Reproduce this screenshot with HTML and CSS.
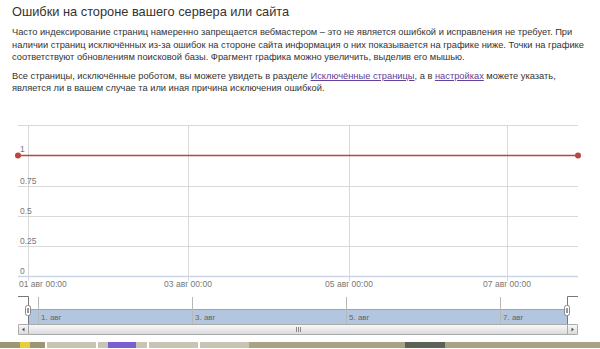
FILE: index.html
```html
<!DOCTYPE html>
<html lang="ru">
<head>
  <meta charset="UTF-8">
  <title>Ошибки на стороне вашего сервера или сайта</title>
  <link rel="stylesheet" href="styles.css">
</head>
<body>
  <div class="intro">
    <h1>Ошибки на стороне вашего сервера или сайта</h1>
    <p>Часто индексирование страниц намеренно запрещается вебмастером – это не является ошибкой и исправления не требует. При наличии страниц исключённых из-за ошибок на стороне сайта информация о них показывается на графике ниже. Точки на графике соответствуют обновлениям поисковой базы. Фрагмент графика можно увеличить, выделив его мышью.</p>
    <p>Все страницы, исключённые роботом, вы можете увидеть в разделе <a href="#">Исключённые страницы</a>, а в <a href="#">настройках</a> можете указать, является ли в вашем случае та или иная причина исключения ошибкой.</p>
  </div>

  <svg class="chart" width="600" height="233" viewBox="0 0 600 233">
    <defs>
      <linearGradient id="bar" x1="0" y1="0" x2="0" y2="1">
        <stop offset="0" stop-color="#fafafa"/>
        <stop offset="1" stop-color="#d9d9d9"/>
      </linearGradient>
    </defs>

    <!-- сетка -->
    <g stroke="#d9d9d9" stroke-width="1">
      <path d="M18 16.5H578M18 77.5H578M18 107.5H578M18 137.5H578"/>
      <path d="M28.5 16V172M188.5 16V172M349.5 16V172M507.5 16V172"/>
    </g>
    <path d="M18 167.5H578" stroke="#c9d5e6" stroke-width="1.5"/>

    <g class="axis">
      <text x="20" y="43">1</text>
      <text x="20" y="75">0.75</text>
      <text x="20" y="105">0.5</text>
      <text x="20" y="135">0.25</text>
      <text x="20" y="165">0</text>
      <text x="19" y="178">01 авг 00:00</text>
      <text x="188" y="178" text-anchor="middle">03 авг 00:00</text>
      <text x="349" y="178" text-anchor="middle">05 авг 00:00</text>
      <text x="507" y="178" text-anchor="middle">07 авг 00:00</text>
    </g>

    <!-- серия -->
    <path d="M18 46.5H578" stroke="#b9473f" stroke-width="1.5"/>
    <circle cx="18" cy="46.5" r="3" fill="#b9473f"/>
    <circle cx="578" cy="46.5" r="3" fill="#b9473f"/>

    <!-- навигатор -->
    <rect x="28" y="200" width="539" height="15" fill="#b3c6df"/>
    <path d="M28 200.5H567" stroke="#8ea8ca"/>
    <g stroke="#b8b8b8">
      <path d="M38.5 188V215M192.5 188V215M346.5 188V215M500.5 188V215"/>
    </g>
    <g class="nav-label">
      <text x="41" y="211">1. авг</text>
      <text x="195" y="211">3. авг</text>
      <text x="349" y="211">5. авг</text>
      <text x="503" y="211">7. авг</text>
    </g>
    <path d="M18 187.5H28.5V215" fill="none" stroke="#777"/>
    <path d="M567.5 215V187.5H578" fill="none" stroke="#777"/>
    <rect x="25.5" y="196.5" width="5" height="10" rx="2" fill="#fff" stroke="#888"/>
    <path d="M27.5 199V204M28.5 199V204" stroke="#999"/>
    <rect x="564.5" y="196.5" width="5" height="10" rx="2" fill="#fff" stroke="#888"/>
    <path d="M566.5 199V204M567.5 199V204" stroke="#999"/>

    <!-- полоса прокрутки -->
    <rect x="18.5" y="215.5" width="559" height="10" fill="url(#bar)" stroke="#c4c4c4"/>
    <rect x="18.5" y="215.5" width="10" height="10" rx="1" fill="url(#bar)" stroke="#aaa"/>
    <rect x="567.5" y="215.5" width="10" height="10" rx="1" fill="url(#bar)" stroke="#aaa"/>
    <path d="M24.5 218.5L22 220.5L24.5 222.5Z" fill="#555"/>
    <path d="M571.5 218.5L574 220.5L571.5 222.5Z" fill="#555"/>
    <rect x="28.5" y="215.5" width="539" height="10" fill="url(#bar)" stroke="#aaa"/>
    <path d="M296.5 218V223M298.5 218V223M300.5 218V223" stroke="#888"/>
  </svg>

  <div class="taskbar">
    <span class="tb-start"></span>
    <span class="tb-btn"></span>
    <span class="tb-btn tb-active"></span>
    <span class="tb-btn"></span>
    <span class="tb-btn"></span>
    <span class="tb-desk"></span>
    <span class="tb-dark"></span>
    <span class="tb-desk"></span>
  </div>
</body>
</html>
```

FILE: styles.css
```css
body {
  margin: 0;
  font-family: "Liberation Sans", Arial, sans-serif;
  color: #333;
  background: #fff;
  overflow: hidden;
}
.intro {
  padding: 0 11px 0 12px;
}
h1 {
  font-size: 12.8px;
  font-weight: normal;
  line-height: 16px;
  margin: 4px 0 0;
  color: #333;
}
p {
  font-size: 9.3px;
  line-height: 12.5px;
  margin: 6px 0 0;
}
a {
  color: #63409a;
}
.chart {
  display: block;
  margin-top: 14px;
}
.axis text {
  font-size: 8.5px;
  fill: #777;
}
.nav-label text {
  font-size: 8px;
  fill: #666;
}
.taskbar {
  display: flex;
  height: 6px;
}
.taskbar span {
  display: block;
}
.tb-start {
  width: 45px;
  background: linear-gradient(90deg, #9d9672 0 20px, #e8cf3a 20px 30px, #9d9672 30px);
}
.tb-btn {
  width: 49px;
  margin-left: 2px;
  background: #c9c5b5;
}
.tb-active {
  background: linear-gradient(90deg, #c9c5b5 0 10px, #7b5ed2 10px 38px, #c9c5b5 38px);
}
.tb-desk {
  flex: 1;
  background: #a9a283;
}
.tb-dark {
  width: 40px;
  background: #5c6257;
}
```
